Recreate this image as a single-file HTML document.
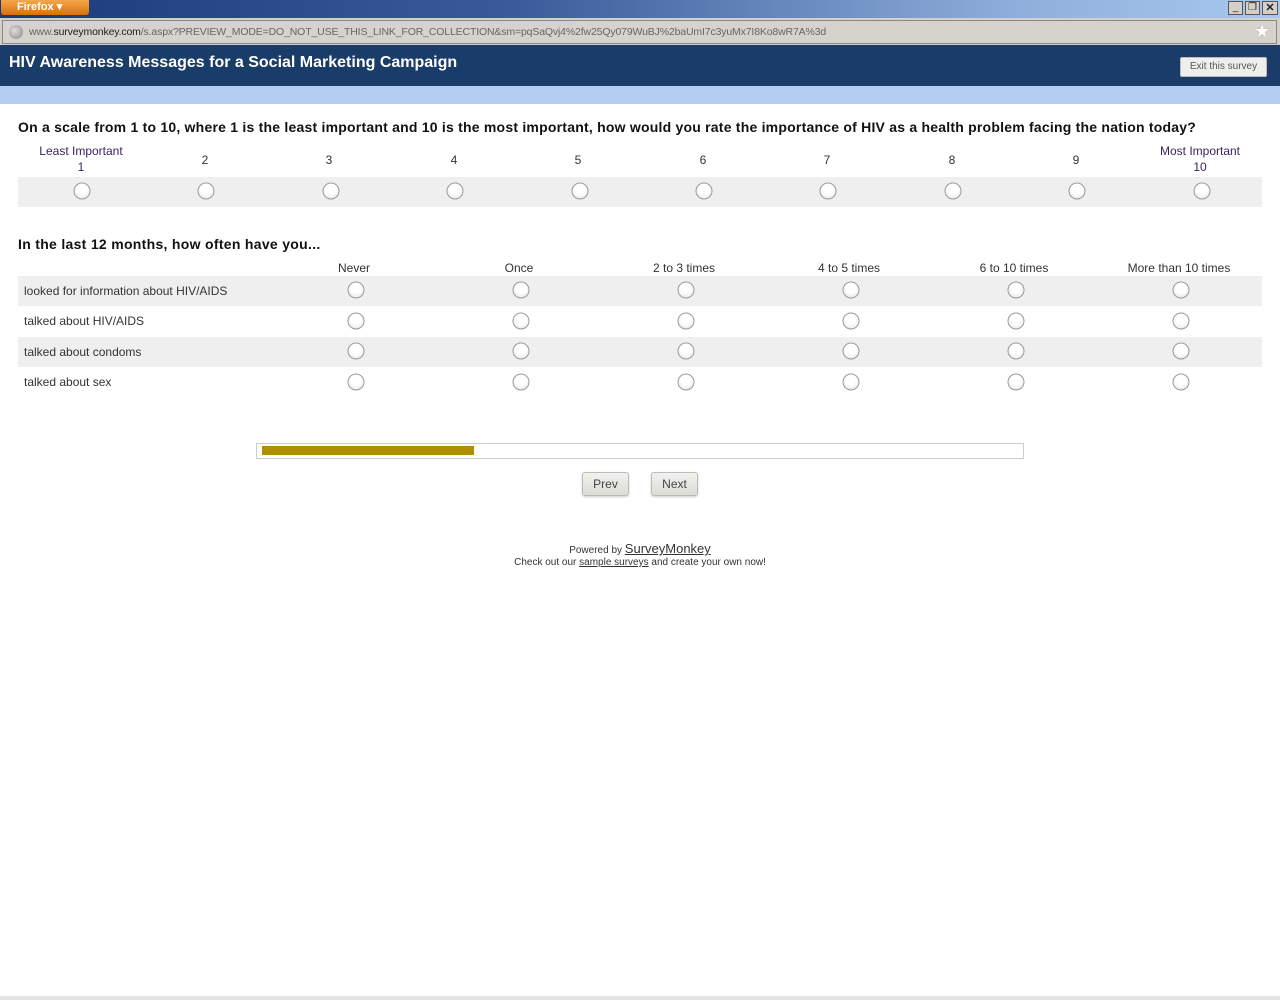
<!DOCTYPE html>
<html><head><meta charset="utf-8">
<style>
*{margin:0;padding:0;box-sizing:border-box}
body{width:1280px;height:1000px;position:relative;background:#fff;font-family:"Liberation Sans",Arial,sans-serif;overflow:hidden;color:#222}
.abs{position:absolute}
.r{position:absolute;width:17px;height:17px;border-radius:50%;border:1px solid #9a9a9a;background:radial-gradient(circle at 50% 35%,#fff 40%,#e2e2e2 100%);transform:translate(-50%,-50%)}
.lbl{position:absolute;font-size:12px;color:#333;transform:translateX(-50%);white-space:nowrap;text-align:center;line-height:16px}
.q{position:absolute;left:18px;font-size:14px;font-weight:bold;letter-spacing:0.22px;color:#111;white-space:nowrap}
.row{position:absolute;left:18px;width:1244px;height:30px}
.rl{position:absolute;left:24px;font-size:12px;color:#333}
.btn{position:absolute;top:472px;height:24px;border:1px solid #bbb;border-radius:3px;background:linear-gradient(#f2f2ee,#dcdcd6);font-size:12px;color:#444;text-align:center;line-height:22px;box-shadow:0 1px 2px rgba(0,0,0,.2)}
</style></head><body>
<div class="abs" style="left:0;top:0;width:1280px;height:18px;background:linear-gradient(90deg,#1b3a7a 0%,#3a5a9a 40%,#8fb0dc 80%,#a8c8ee 100%)"></div>
<div class="abs" style="left:1px;top:0;width:88px;height:15px;background:linear-gradient(#f5a64a,#d9700e);border-radius:0 0 3px 3px;color:#fff;font-size:11px;font-weight:bold;line-height:15px;padding-left:16px">Firefox ▾</div>
<div class="abs" style="left:1228px;top:1px;width:15px;height:14px;background:#d4d0c8;border:1px solid #555;font-size:10px;text-align:center;line-height:12px">_</div>
<div class="abs" style="left:1245px;top:1px;width:15px;height:14px;background:#d4d0c8;border:1px solid #555;font-size:10px;text-align:center;line-height:12px">❐</div>
<div class="abs" style="left:1262px;top:1px;width:16px;height:14px;background:#d4d0c8;border:1px solid #555;font-size:11px;font-weight:bold;text-align:center;line-height:12px">✕</div>
<div class="abs" style="left:0;top:18px;width:1280px;height:27px;background:#d4d0c8"></div>
<div class="abs" style="left:2px;top:20px;width:1275px;height:24px;border:1px solid #888;background:#d6d2cc"></div>
<div class="abs" style="left:9px;top:25px;width:14px;height:14px;border-radius:50%;background:radial-gradient(circle at 40% 40%,#ddd,#888)"></div>
<div class="abs" style="left:29px;top:26px;font-size:10.5px;letter-spacing:-0.15px;color:#666;white-space:nowrap">www.<span style="color:#222">surveymonkey.com</span>/s.aspx?PREVIEW_MODE=DO_NOT_USE_THIS_LINK_FOR_COLLECTION&amp;sm=pqSaQvj4%2fw25Qy079WuBJ%2baUmI7c3yuMx7I8Ko8wR7A%3d</div>
<div class="abs" style="left:1254px;top:21px;font-size:18px;color:#fff;text-shadow:0 0 1px #888">★</div>
<div class="abs" style="left:0;top:45px;width:1280px;height:41px;background:#1a3c68"></div>
<div class="abs" style="left:9px;top:54px;font-size:16px;font-weight:bold;color:#fff">HIV Awareness Messages for a Social Marketing Campaign</div>
<div class="abs" style="left:1180px;top:57px;width:87px;height:20px;background:#eeeeec;border:1px solid #bbb;border-radius:2px;font-size:10px;color:#555;text-align:center;line-height:18px">Exit this survey</div>
<div class="abs" style="left:0;top:86px;width:1280px;height:18px;background:#b4cdf0"></div>

<div class="q" style="top:119px">On a scale from 1 to 10, where 1 is the least important and 10 is the most important, how would you rate the importance of HIV as a health problem facing the nation today?</div>
<div class="row" style="top:177px;height:30px;background:#efefef"></div>
<div class="lbl" style="left:81px;top:143px;color:#3a1f5e">Least Important<br>1</div>
<div class="lbl" style="left:1200px;top:143px;color:#3a1f5e">Most Important<br>10</div>
<div class="lbl" style="left:205px;top:152px">2</div>
<div class="lbl" style="left:329px;top:152px">3</div>
<div class="lbl" style="left:454px;top:152px">4</div>
<div class="lbl" style="left:578px;top:152px">5</div>
<div class="lbl" style="left:703px;top:152px">6</div>
<div class="lbl" style="left:827px;top:152px">7</div>
<div class="lbl" style="left:952px;top:152px">8</div>
<div class="lbl" style="left:1076px;top:152px">9</div>
<div class="r" style="left:82px;top:191px"></div><div class="r" style="left:206px;top:191px"></div><div class="r" style="left:331px;top:191px"></div><div class="r" style="left:455px;top:191px"></div><div class="r" style="left:580px;top:191px"></div><div class="r" style="left:704px;top:191px"></div><div class="r" style="left:828px;top:191px"></div><div class="r" style="left:953px;top:191px"></div><div class="r" style="left:1077px;top:191px"></div><div class="r" style="left:1202px;top:191px"></div>

<div class="q" style="top:236px;letter-spacing:0.3px">In the last 12 months, how often have you...</div>
<div class="lbl" style="left:354px;top:260px">Never</div>
<div class="lbl" style="left:519px;top:260px">Once</div>
<div class="lbl" style="left:684px;top:260px">2 to 3 times</div>
<div class="lbl" style="left:849px;top:260px">4 to 5 times</div>
<div class="lbl" style="left:1014px;top:260px">6 to 10 times</div>
<div class="lbl" style="left:1179px;top:260px">More than 10 times</div>
<div class="row" style="top:276px;background:#efefef"></div>
<div class="row" style="top:337px;background:#efefef"></div>
<div class="rl" style="top:284px">looked for information about HIV/AIDS</div>
<div class="rl" style="top:314px">talked about HIV/AIDS</div>
<div class="rl" style="top:345px">talked about condoms</div>
<div class="rl" style="top:375px">talked about sex</div>
<div id="m"></div>
<script>
var xs=[356,521,686,851,1016,1181],ys=[290,321,351,382],h='';
ys.forEach(function(y){xs.forEach(function(x){h+='<div class="r" style="left:'+x+'px;top:'+y+'px"></div>'})});
document.getElementById('m').innerHTML=h;
</script>

<div class="abs" style="left:256px;top:443px;width:768px;height:16px;border:1px solid #ccc;background:#fff"></div>
<div class="abs" style="left:262px;top:446px;width:212px;height:9px;background:#ae8f00"></div>
<div class="btn" style="left:582px;width:47px">Prev</div>
<div class="btn" style="left:651px;width:47px">Next</div>
<div class="abs" style="left:0;width:1280px;top:541px;text-align:center;font-size:10px;color:#333">Powered by <span style="font-size:13px;text-decoration:underline;color:#333">SurveyMonkey</span></div>
<div class="abs" style="left:0;width:1280px;top:557px;text-align:center;font-size:10px;color:#333">Check out our <span style="text-decoration:underline">sample surveys</span> and create your own now!</div>
<div class="abs" style="left:0;top:996px;width:1280px;height:4px;background:#e4e4e4"></div>
</body></html>
